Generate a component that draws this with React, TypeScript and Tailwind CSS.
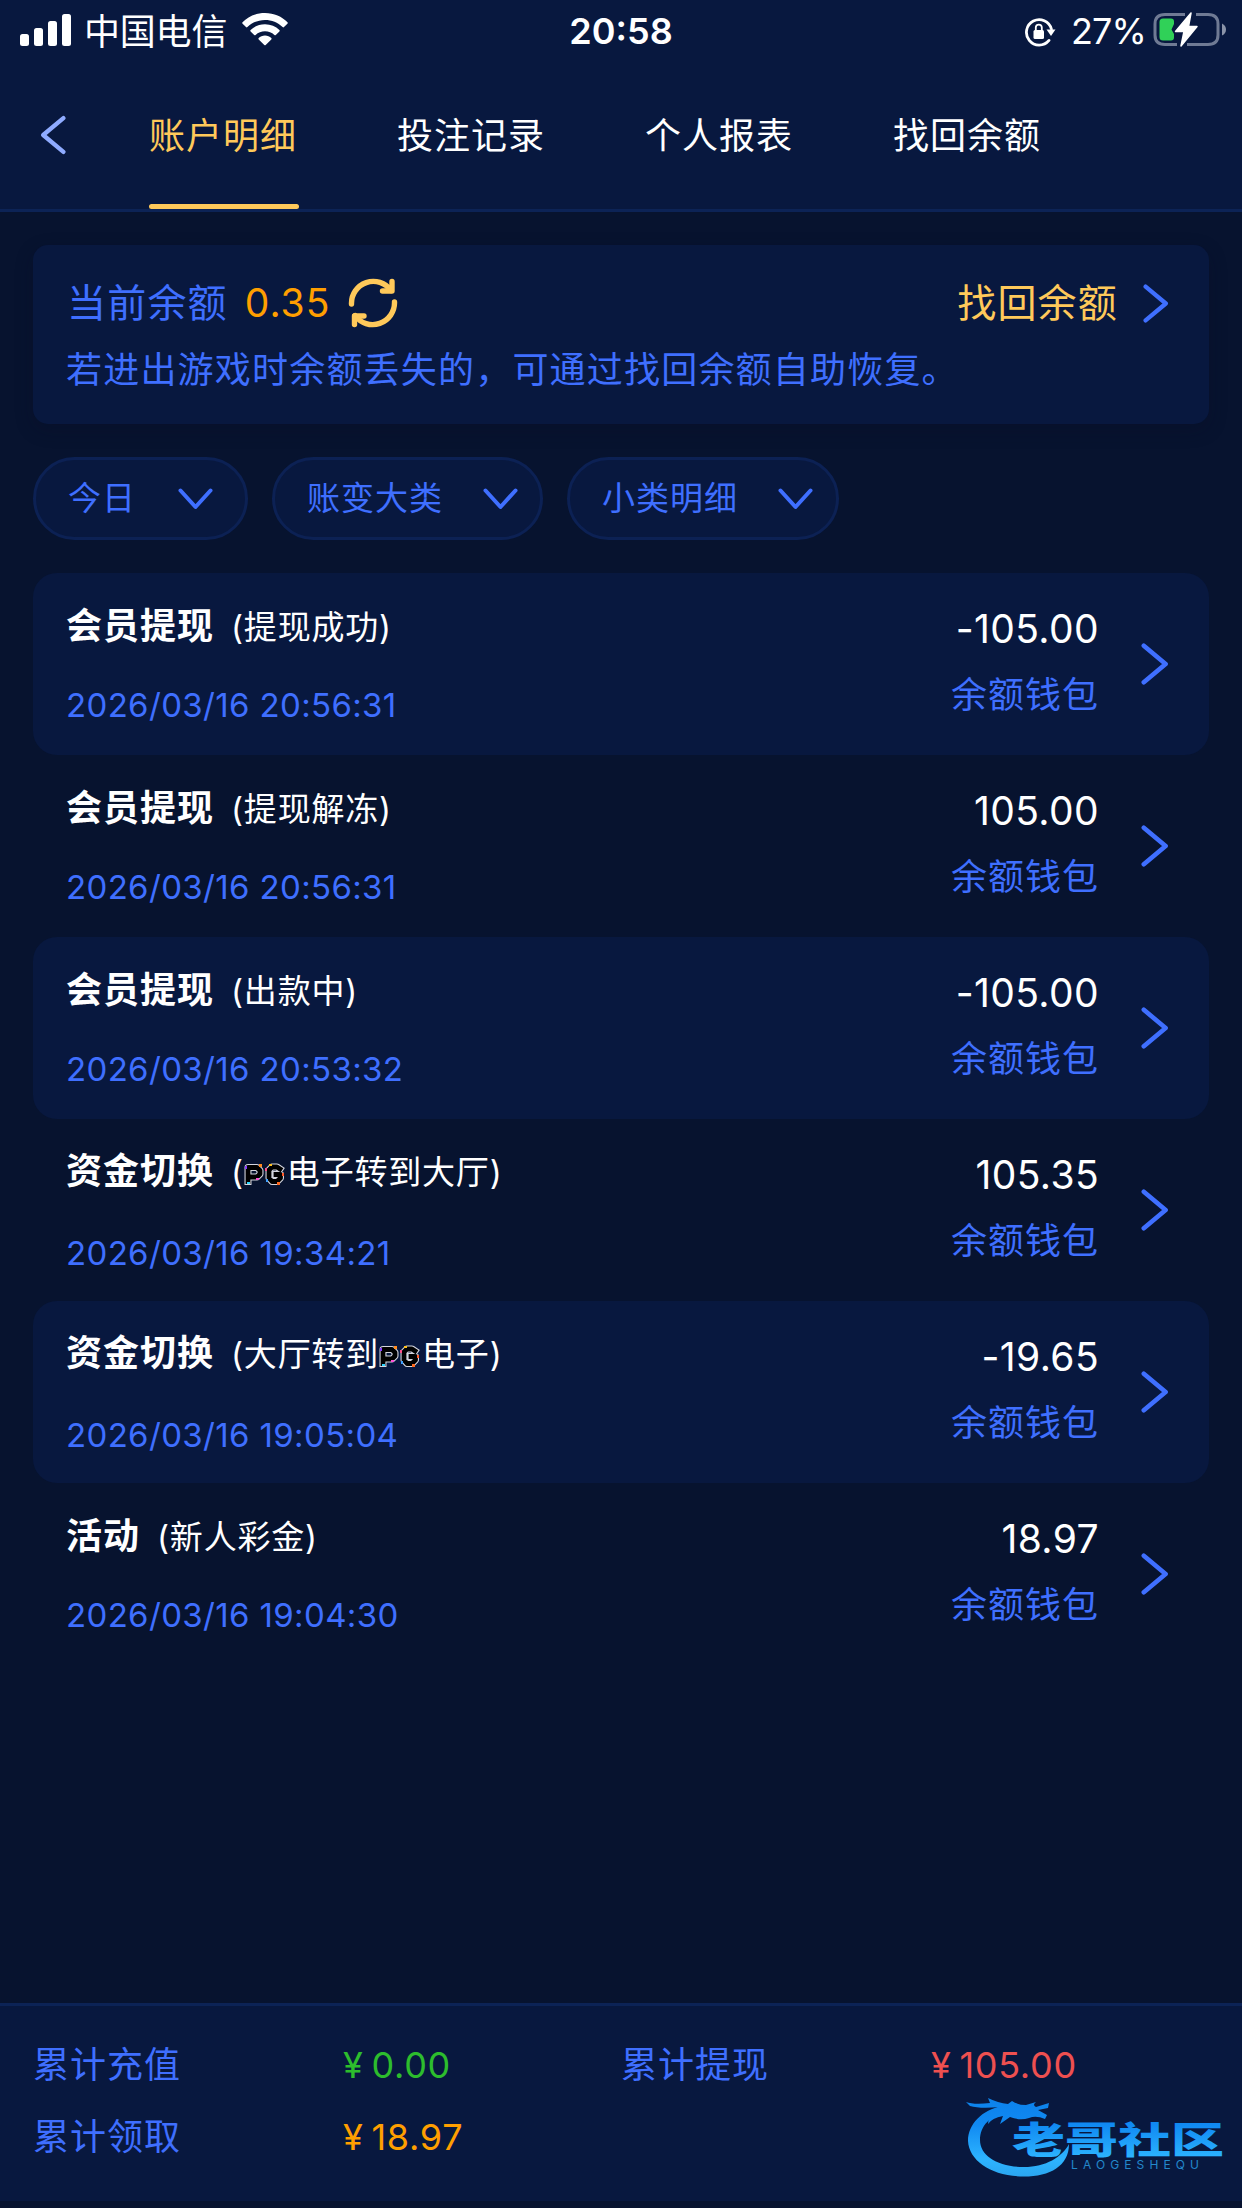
import React from 'react';

type Entry = {
  title: string;
  note: string;
  time: string;
  amount: string;
};

const TABS = ['账户明细', '投注记录', '个人报表', '找回余额'];

const FILTERS = [
  { label: '今日', width: 'w-[215px]', pad: 'pr-[32px]' },
  { label: '账变大类', width: 'w-[271px]', pad: 'pr-[22px]' },
  { label: '小类明细', width: 'w-[272px]', pad: 'pr-[23px]' },
];

const ENTRIES: Entry[] = [
  { title: '会员提现', note: '(提现成功)', time: '2026/03/16 20:56:31', amount: '-105.00' },
  { title: '会员提现', note: '(提现解冻)', time: '2026/03/16 20:56:31', amount: '105.00' },
  { title: '会员提现', note: '(出款中)', time: '2026/03/16 20:53:32', amount: '-105.00' },
  { title: '资金切换', note: '({pg}电子转到大厅)', time: '2026/03/16 19:34:21', amount: '105.35' },
  { title: '资金切换', note: '(大厅转到{pg}电子)', time: '2026/03/16 19:05:04', amount: '-19.65' },
  { title: '活动', note: '(新人彩金)', time: '2026/03/16 19:04:30', amount: '18.97' },
];

const TOTALS = [
  { label: '累计充值', value: '0.00', color: 'text-[#2dbd2d]' },
  { label: '累计提现', value: '105.00', color: 'text-[#ee5050]' },
  { label: '累计领取', value: '18.97', color: 'text-[#ff9f00]' },
];

function Chevron({ className }: { className?: string }) {
  return (
    <svg className={className} viewBox="0 0 28 42" fill="none" stroke="currentColor" strokeWidth="4.6" strokeLinecap="round" strokeLinejoin="round">
      <path d="M2.8 2.8 L24.6 21 L2.8 39.2" />
    </svg>
  );
}

function StatusBar() {
  return (
    <div className="grid h-[60px] grid-cols-[1fr_auto_1fr] items-center pl-5 pr-[15px] text-white">
      <div className="flex items-center">
        <svg className="h-8 w-[51px]" viewBox="0 0 51 32" fill="currentColor">
          <rect x="0" y="20" width="9" height="12" rx="2.5" />
          <rect x="14" y="14" width="9" height="18" rx="2.5" />
          <rect x="28" y="7" width="9" height="25" rx="2.5" />
          <rect x="42" y="0" width="9" height="32" rx="2.5" />
        </svg>
        <span className="ml-[13px] mt-[3px] text-[36px] leading-none tracking-[-0.2px]">中国电信</span>
        <svg className="ml-[15px] h-[34px] w-[46px]" viewBox="0 0 46 34" fill="currentColor">
          <path d="M23 0 C32 0 40 3.6 45.5 9.2 Q46 10 45.4 10.7 L42 14.1 Q41.3 14.7 40.6 14 C35.8 9.4 29.8 6.9 23 6.9 C16.2 6.9 10.2 9.4 5.4 14 Q4.7 14.7 4 14.1 L.6 10.7 Q0 10 .5 9.2 C6 3.6 14 0 23 0 Z" />
          <path d="M23 11.3 C28.7 11.3 33.7 13.4 37.4 17 Q38 17.7 37.4 18.4 L33.8 21.9 Q33.1 22.5 32.4 21.9 C29.8 19.6 26.6 18.3 23 18.3 C19.4 18.3 16.2 19.6 13.6 21.9 Q12.9 22.5 12.2 21.9 L8.6 18.4 Q8 17.7 8.6 17 C12.3 13.4 17.3 11.3 23 11.3 Z" />
          <path d="M23 22.6 C25.5 22.6 27.7 23.5 29.3 25 Q30 25.7 29.3 26.4 L23.7 32 Q23 32.6 22.3 32 L16.7 26.4 Q16 25.7 16.7 25 C18.3 23.5 20.5 22.6 23 22.6 Z" />
        </svg>
      </div>

      <span className="mr-[5px] mt-[2px] text-[36px] font-semibold leading-none">20:58</span>

      <div className="flex items-center justify-end">
        <svg className="mt-[3px] h-8 w-8" viewBox="0 0 32 32" fill="none">
          <path d="M27.4 13 A12.7 12.7 0 1 0 25 24.4" stroke="currentColor" strokeWidth="2.8" strokeLinecap="round" />
          <path d="M22.5 13.5 H31.5 L27 20 Z" fill="currentColor" />
          <rect x="9.5" y="14" width="10.5" height="9" rx="1.5" fill="currentColor" />
          <path d="M11.8 15 V11.6 A3 3 0 0 1 17.8 11.6 V15" stroke="currentColor" strokeWidth="1.8" />
        </svg>
        <span className="ml-[15px] mt-[2px] text-[36px] leading-none tracking-[-0.9px]">27%</span>
        <svg className="ml-[7px] h-9 w-[74px]" viewBox="0 0 74 36" fill="none">
          <path d="M32 2.5 H12 Q2 2.5 2 12 V23 Q2 32.5 12 32.5 H24 M43 2.5 H55 Q65 2.5 65 12 V23 Q65 32.5 55 32.5 H34" stroke="#6f7a94" strokeWidth="3" />
          <path d="M69 11.5 Q73 13.5 73 17.5 Q73 21.5 69 23.5 Z" fill="#8a93a8" />
          <path d="M10 6.5 H18 Q21 6.5 21 9.5 V12 L18.5 17.5 L21 22 V25.5 Q21 28.5 18 28.5 H10 Q6.5 28.5 6.5 25 V10 Q6.5 6.5 10 6.5 Z" fill="#30d158" />
          <path d="M38 1 L22.5 19.5 H31 L28 34 L44 14.5 H35.5 Z" fill="white" stroke="white" strokeWidth="1.5" strokeLinejoin="round" />
        </svg>
      </div>
    </div>
  );
}

function TabBar() {
  return (
    <nav className="flex h-[149px] pl-[40px]">
      <button className="flex h-[150px] w-[109px] items-center text-[#8fabff]">
        <Chevron className="h-[40px] w-[26px] rotate-180" />
      </button>
      {TABS.map((tab, i) => (
        <button
          key={tab}
          className={`mr-[98px] flex h-[149px] w-[150px] flex-col justify-between text-[36px] tracking-[1px] ${i === 0 ? 'text-[#ffc95a]' : 'text-white'}`}
        >
          <span className="mt-[49px] -ml-[2px] whitespace-nowrap leading-[54px]">{tab}</span>
          {i === 0 && <span className="h-[5px] w-full rounded-full bg-[#ffc95a]" />}
        </button>
      ))}
    </nav>
  );
}

function RefreshIcon() {
  return (
    <svg className="h-[50px] w-[50px] text-[#ffc95a]" viewBox="0 0 50 50" fill="none" stroke="currentColor" strokeWidth="5.4" strokeLinecap="round" strokeLinejoin="round">
      <path d="M3.5 26 A21.8 21.8 0 0 1 43 12.5" />
      <path d="M44 3.5 V13 H34.5" />
      <path d="M46.5 24 A21.8 21.8 0 0 1 7 37.5" />
      <path d="M6.5 46.5 V38 H16" />
    </svg>
  );
}

function BalanceCard() {
  return (
    <section className="h-[179px] rounded-[15px] bg-[#08183f] pl-[34px] pr-[40px] pt-[29px] shadow-[0_6px_18px_rgba(10,14,35,0.3)]">
      <div className="flex h-[57px] items-center text-[39px] leading-none">
        <span className="tracking-[1.2px] text-[#3f6fff]">当前余额</span>
        <span className="ml-[17px] tracking-[1px] text-[#ff9f00]">0.35</span>
        <span className="ml-[18px]"><RefreshIcon /></span>
        <span className="ml-auto tracking-[1.2px] text-[#ffc95a]">找回余额</span>
        <Chevron className="ml-[25px] mt-[2px] h-[39px] w-[26px] text-[#3f6fff]" />
      </div>
      <p className="-ml-px mt-[12px] text-[36px] leading-[54px] tracking-[1.2px] text-[#3f6fff]">
        若进出游戏时余额丢失的，可通过找回余额自助恢复。
      </p>
    </section>
  );
}

function Filters() {
  return (
    <div className="mt-[33px] flex gap-6">
      {FILTERS.map((f) => (
        <button
          key={f.label}
          className={`flex h-[83px] items-center justify-between rounded-full border-[3px] border-[#0c2154] bg-[#08183f] pl-[32px] text-[33px] leading-none tracking-[1px] text-[#3f6fff] ${f.width} ${f.pad}`}
        >
          <span>{f.label}</span>
          <svg className="h-[22px] w-[35px]" viewBox="0 0 35 22" fill="none" stroke="currentColor" strokeWidth="4" strokeLinecap="round" strokeLinejoin="round">
            <path d="M2.5 2.5 L17.5 19 L32.5 2.5" />
          </svg>
        </button>
      ))}
    </div>
  );
}

// Black pixel lettering with a pale outline and a few neon specks
function PgLogo() {
  return (
    <svg className="mr-[2px] inline-block h-[23px] w-[41px] align-[-2px]" viewBox="0 0 41 23" fill="none">
      <g strokeLinejoin="round" strokeLinecap="square">
        <path d="M4 18.5 V4.5 H13 L16 7.5 V11 L13 14 H6" stroke="#d3d5de" strokeWidth="7" />
        <path d="M36 6 L33 4 H28 L25 7 V15 L28 18.5 H33 L36.5 15 V11.5 H32" stroke="#d3d5de" strokeWidth="7" />
        <path d="M4 18.5 V4.5 H13 L16 7.5 V11 L13 14 H6" stroke="#000" strokeWidth="4.8" />
        <path d="M36 6 L33 4 H28 L25 7 V15 L28 18.5 H33 L36.5 15 V11.5 H32" stroke="#000" strokeWidth="4.8" />
      </g>
      <path d="M1 3h2v3H1z" fill="#8b3dff" />
      <path d="M15 1h3v3h-3z" fill="#ff8a1f" />
      <path d="M12 15h3v2h-3z" fill="#ff4fd8" />
      <path d="M3 19h3v2H3z" fill="#2fd3ff" />
      <path d="M25 1h3v2h-3z" fill="#ffc21f" />
      <path d="M38 10h2v3h-2z" fill="#ff5a2a" />
      <path d="M22 16h2v3h-2z" fill="#3fa0ff" />
      <path d="M33 19h3v3h-3z" fill="#ff6a1f" />
      <path d="M21 5h2v3h-2z" fill="#ff4f8a" />
    </svg>
  );
}

function EntryNote({ note }: { note: string }) {
  const [before, after] = note.split('{pg}');
  return (
    <span className="ml-[17px] text-[33px] font-normal tracking-[0.8px]">
      {before}
      {after && <PgLogo />}
      {after}
    </span>
  );
}

function EntryRow({ entry, shaded }: { entry: Entry; shaded: boolean }) {
  // rows with the inline logo sit a touch taller between title and time
  const hasLogo = entry.note.includes('{pg}');
  return (
    <li className={`flex h-[182px] items-center rounded-[24px] pl-[33px] pr-[40px] ${shaded ? 'bg-[#08183f]' : ''}`}>
      <div className="flex h-full flex-col">
        <div className={`flex h-[54px] items-baseline leading-[54px] text-white ${hasLogo ? 'mt-[25px]' : 'mt-[26px]'}`}>
          <span className="text-[36px] font-bold tracking-[1px]">{entry.title}</span>
          <EntryNote note={entry.note} />
        </div>
        <span className={`text-[33px] leading-[50px] tracking-[0.35px] text-[#3f6fff] ${hasLogo ? 'mt-[30px]' : 'mt-[27px]'}`}>{entry.time}</span>
      </div>
      <div className="ml-auto flex h-full flex-col items-end">
        <span className="mt-[28px] text-[39px] leading-[56px] tracking-[0.4px] text-white">{entry.amount}</span>
        <span className="mt-[11px] text-[36px] leading-[54px] tracking-[1px] text-[#3f6fff]">余额钱包</span>
      </div>
      <Chevron className="ml-[42px] h-[42px] w-[28px] text-[#3f6fff]" />
    </li>
  );
}

function CommunityLogo() {
  return (
    <svg className="absolute bottom-[23px] right-[16px] h-[92px] w-[262px]" viewBox="964 2086 262 92">
      <defs>
        <linearGradient id="brand" x1="0" y1="2090" x2="0" y2="2176" gradientUnits="userSpaceOnUse">
          <stop offset="0" stopColor="#0b7fe8" />
          <stop offset="0.4" stopColor="#1089f2" />
          <stop offset="0.8" stopColor="#2db4ff" />
          <stop offset="1" stopColor="#2ba6f0" />
        </linearGradient>
      </defs>
      <g fill="url(#brand)">
        <path d="M1002 2106 C982 2110 968 2124 968 2141 C969 2161 992 2176.500 1024 2176.500 C1050 2176.500 1069 2166 1069 2144 C1062 2157 1046 2167 1024 2167 C998 2167 980 2156 980 2140 C980 2126 990 2115 1008 2112 Z" />
        <path d="M966 2102 Q974 2105 990 2103 L988 2098 Q998 2103 1008 2104 L1012 2101 Q1018 2105 1026 2105 L1036 2102 Q1032 2105 1036 2107 L1049 2103 L1048 2108 L1038 2110 L1047 2115 L1045 2119 Q1036 2115 1029 2118 Q1020 2121 1010 2117 L1000 2124 L1003 2116 Q992 2118 988 2124 Q988 2113 1000 2107 Q980 2109 970 2106 Z" />
        <text x="1012" y="2154" fontSize="37" fontWeight="900" textLength="212" lengthAdjust="spacingAndGlyphs">老哥社区</text>
        <text x="1071" y="2169" fontSize="12" textLength="128" lengthAdjust="spacing" opacity="0.75">LAOGESHEQU</text>
      </g>
    </svg>
  );
}

function Totals() {
  return (
    <footer className="relative mt-auto h-[198px] border-t-[3px] border-[#0c2356] bg-[#08183f] pl-[33px] pt-[32px] text-[36px] leading-[54px]">
      <dl className="grid grid-cols-[588px_588px] gap-y-[18px]">
        {TOTALS.map((t) => (
          <div key={t.label} className="flex">
            <dt className="w-[310px] tracking-[1px] text-[#3f6fff]">{t.label}</dt>
            <dd className={`tracking-[0.7px] ${t.color}`}>
              <span className="mr-[8px]">¥</span>
              {t.value}
            </dd>
          </div>
        ))}
      </dl>
      <CommunityLogo />
    </footer>
  );
}

export default function App() {
  return (
    <div className="flex h-[2208px] w-[1242px] flex-col overflow-hidden bg-[#07132f] pb-[7px] font-['Inter','Noto_Sans_CJK_SC',sans-serif]">
      <header className="h-[212px] border-b-[3px] border-[#0c2356] bg-[#08183f]">
        <StatusBar />
        <TabBar />
      </header>

      <main className="px-[33px] pt-[33px]">
        <BalanceCard />
        <Filters />
        <ul className="mt-[33px]">
          {ENTRIES.map((entry, i) => (
            <EntryRow key={i} entry={entry} shaded={i % 2 === 0} />
          ))}
        </ul>
      </main>

      <Totals />
    </div>
  );
}
